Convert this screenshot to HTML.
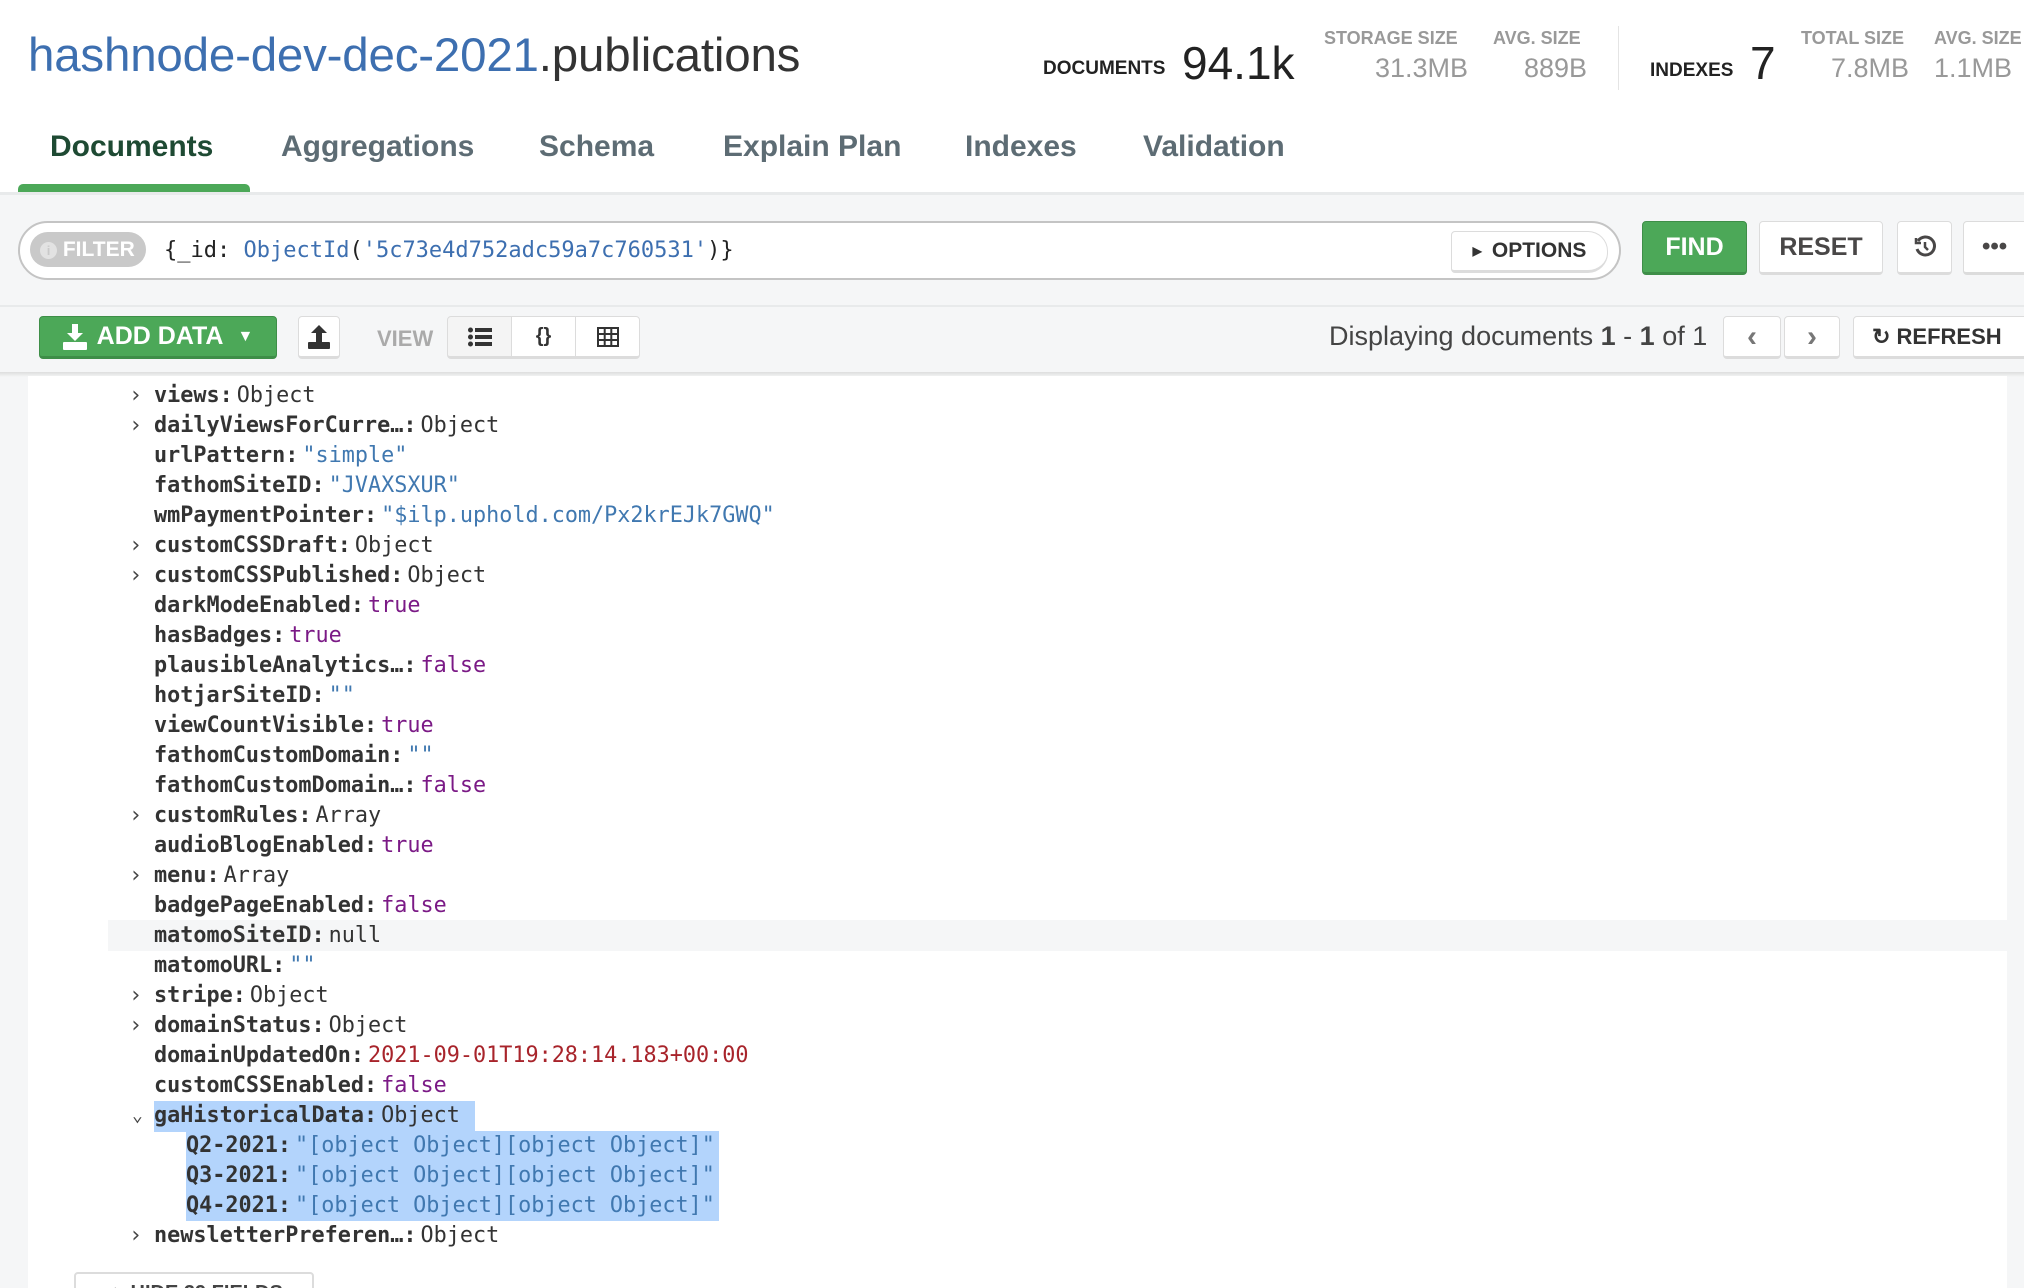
<!DOCTYPE html>
<html style="width:2024px;height:1288px;overflow:hidden"><head><meta charset="utf-8"><style>
*{box-sizing:border-box;margin:0;padding:0}
body{width:2024px;height:1288px;overflow:hidden;background:#fff;font-family:"Liberation Sans",Arial,sans-serif;position:relative;color:#333}
.a{position:absolute;white-space:nowrap}
.btn{position:absolute;background:#fff;border:1px solid #dcdcdc;border-bottom:3px solid #dcdcdc;border-radius:4px;display:flex;align-items:center;justify-content:center;font-weight:bold;color:#494747}
.row{position:absolute;left:108px;right:17px;height:30px;font-family:"DejaVu Sans Mono","Liberation Mono",monospace;font-size:21.8px;line-height:30px;white-space:nowrap}
.row .k{position:absolute;left:46px;font-weight:bold;color:#333}
.row .k span{font-weight:normal;margin-left:4px}
.row .ar{position:absolute;left:21px;top:0;color:#444;font-size:22px}
.s{color:#4078b0}.b{color:#7b1a86}.d{color:#a8242b}.o{color:#333}
.sel{background:#b3d4fc}
</style></head><body>
<div class="a" style="left:28px;top:28px;font-size:47.5px;letter-spacing:-0.2px"><span style="color:#3d6fb0">hashnode-dev-dec-2021</span><span style="color:#333">.publications</span></div>
<div class="a" style="left:1043px;top:58px;font-size:19px;font-weight:bold;color:#222">DOCUMENTS</div>
<div class="a" style="left:1182px;top:36px;font-size:46px;color:#222">94.1k</div>
<div class="a" style="left:1324px;top:28px;font-size:18px;font-weight:bold;color:#999">STORAGE SIZE</div>
<div class="a" style="left:1324px;width:144px;text-align:right;top:53px;font-size:27px;color:#999">31.3MB</div>
<div class="a" style="left:1493px;top:28px;font-size:18px;font-weight:bold;color:#999">AVG. SIZE</div>
<div class="a" style="left:1493px;width:94px;text-align:right;top:53px;font-size:27px;color:#999">889B</div>
<div class="a" style="left:1618px;top:26px;width:1px;height:64px;background:#e4e4e4"></div>
<div class="a" style="left:1650px;top:60px;font-size:19px;font-weight:bold;color:#222">INDEXES</div>
<div class="a" style="left:1750px;top:36px;font-size:46px;color:#222">7</div>
<div class="a" style="left:1801px;top:28px;font-size:18px;font-weight:bold;color:#999">TOTAL SIZE</div>
<div class="a" style="left:1801px;width:108px;text-align:right;top:53px;font-size:27px;color:#999">7.8MB</div>
<div class="a" style="left:1934px;top:28px;font-size:18px;font-weight:bold;color:#999">AVG. SIZE</div>
<div class="a" style="left:1934px;top:53px;font-size:27px;color:#999">1.1MB</div>
<div class="a" style="left:50px;top:130px;font-size:30px;font-weight:bold;color:#1e4a33">Documents</div>
<div class="a" style="left:281px;top:130px;font-size:30px;font-weight:bold;color:#5d6c74">Aggregations</div>
<div class="a" style="left:539px;top:130px;font-size:30px;font-weight:bold;color:#5d6c74">Schema</div>
<div class="a" style="left:723px;top:130px;font-size:30px;font-weight:bold;color:#5d6c74">Explain Plan</div>
<div class="a" style="left:965px;top:130px;font-size:30px;font-weight:bold;color:#5d6c74">Indexes</div>
<div class="a" style="left:1143px;top:130px;font-size:30px;font-weight:bold;color:#5d6c74">Validation</div>
<div class="a" style="left:18px;top:184px;width:232px;height:9px;background:#4ca858;border-radius:5px 5px 0 0"></div>
<div class="a" style="left:0;top:192px;width:2024px;height:180px;background:#f5f6f7;border-top:3px solid #e8eaeb"></div>
<div class="a" style="left:0;top:305px;width:2024px;height:2px;background:#e8eaeb"></div>
<div class="a" style="left:18px;top:221px;width:1603px;height:59px;background:#fff;border:2px solid #c4c4c4;border-radius:30px"></div>
<div class="a" style="left:30px;top:232px;width:116px;height:35px;background:#c9c9c9;border-radius:18px;color:#fff;font-size:21px;font-weight:bold;line-height:35px;padding-left:10px"><span style="display:inline-block;width:17px;height:17px;border-radius:50%;background:#e2e2e2;color:#c9c9c9;font-size:13px;line-height:17px;text-align:center;vertical-align:1px">i</span> FILTER</div>
<div class="a" style="left:164px;top:238px;font-family:'DejaVu Sans Mono',monospace;font-size:22px;color:#222">{_id: <span style="color:#3d6fb0">ObjectId</span>(<span style="color:#3d6fb0">'5c73e4d752adc59a7c760531'</span>)}</div>
<div class="btn" style="left:1451px;top:231px;width:157px;height:42px;border-radius:4px 20px 20px 4px;font-size:21px;color:#333"><span style="font-size:12px;margin-right:10px">▶</span>OPTIONS</div>
<div class="btn" style="left:1642px;top:221px;width:105px;height:54px;background:#4ca858;border-color:#3e8e48;color:#fff;font-size:25px">FIND</div>
<div class="btn" style="left:1759px;top:221px;width:124px;height:54px;font-size:25px;color:#494747">RESET</div>
<div class="btn" style="left:1897px;top:221px;width:55px;height:54px"><svg width="24" height="24" viewBox="0 0 24 24" fill="none" stroke="#494747" stroke-width="3"><path d="M5 6 A9 9 0 1 1 4 14"/><path d="M3 3 v5 h5" stroke-width="2.5"/><path d="M12 7 v5 l3 3" stroke-width="2.5"/></svg></div>
<div class="btn" style="left:1963px;top:221px;width:80px;height:54px;font-size:24px;justify-content:flex-start;padding-left:18px">•••</div>
<div class="btn" style="left:39px;top:316px;width:238px;height:43px;background:#4ca858;border-color:#3e8e48;color:#fff;font-size:25px"><svg width="24" height="26" viewBox="0 0 24 26" style="margin-right:10px"><path d="M9 0h6v9h5l-8 8-8-8h5z" fill="#fff"/><rect x="0" y="18" width="24" height="8" rx="1" fill="#fff"/></svg>ADD DATA<span style="font-size:16px;margin-left:14px">▼</span></div>
<div class="btn" style="left:298px;top:316px;width:42px;height:43px"><svg width="22" height="24" viewBox="0 0 22 24"><path d="M8 17h6V8h5L11 0 3 8h5z" fill="#333"/><rect x="0" y="17" width="22" height="7" rx="1" fill="#333"/></svg></div>
<div class="a" style="left:377px;top:326px;font-size:22px;font-weight:bold;color:#aaa">VIEW</div>
<div class="btn" style="left:447px;top:316px;width:65px;height:43px;background:#f4f4f4;border-radius:4px 0 0 4px"><svg width="24" height="20" viewBox="0 0 24 20" fill="#333"><circle cx="2.5" cy="3" r="2.5"/><circle cx="2.5" cy="10" r="2.5"/><circle cx="2.5" cy="17" r="2.5"/><rect x="7" y="1" width="17" height="4"/><rect x="7" y="8" width="17" height="4"/><rect x="7" y="15" width="17" height="4"/></svg></div>
<div class="btn" style="left:511px;top:316px;width:65px;height:43px;border-radius:0;font-size:20px;color:#333">{}</div>
<div class="btn" style="left:575px;top:316px;width:65px;height:43px;border-radius:0 4px 4px 0"><svg width="22" height="20" viewBox="0 0 22 20" fill="none" stroke="#333" stroke-width="2"><rect x="1" y="1" width="20" height="18"/><path d="M1 7h20M1 13h20M7.7 1v18M14.3 1v18"/></svg></div>
<div class="a" style="left:1329px;top:321px;font-size:27px;color:#444">Displaying documents <b>1</b> - <b>1</b> of 1</div>
<div class="btn" style="left:1723px;top:316px;width:58px;height:43px;color:#777;font-size:30px">‹</div>
<div class="btn" style="left:1784px;top:316px;width:56px;height:43px;color:#777;font-size:30px">›</div>
<div class="btn" style="left:1853px;top:316px;width:190px;height:43px;font-size:22px;color:#333;justify-content:flex-start;padding-left:18px">&#x21BB;&nbsp;REFRESH</div>
<div class="a" style="left:0;top:372px;width:2024px;height:916px;background:#f5f6f7"></div>
<div class="a" style="left:0;top:372px;width:2024px;height:5px;background:linear-gradient(#ddd,#f5f6f7)"></div>
<div class="a" style="left:28px;top:376px;width:1979px;height:912px;background:#fff"></div>
<div class="a" style="left:108px;top:920px;width:1899px;height:31px;background:#f5f6f7"></div>

<div class="row" style="top:381px"><span class="ar">›</span><span class="k">views:<span class="o">Object</span></span></div>
<div class="row" style="top:411px"><span class="ar">›</span><span class="k">dailyViewsForCurre…:<span class="o">Object</span></span></div>
<div class="row" style="top:441px"><span class="k">urlPattern:<span class="s">"simple"</span></span></div>
<div class="row" style="top:471px"><span class="k">fathomSiteID:<span class="s">"JVAXSXUR"</span></span></div>
<div class="row" style="top:501px"><span class="k">wmPaymentPointer:<span class="s">"$ilp.uphold.com/Px2krEJk7GWQ"</span></span></div>
<div class="row" style="top:531px"><span class="ar">›</span><span class="k">customCSSDraft:<span class="o">Object</span></span></div>
<div class="row" style="top:561px"><span class="ar">›</span><span class="k">customCSSPublished:<span class="o">Object</span></span></div>
<div class="row" style="top:591px"><span class="k">darkModeEnabled:<span class="b">true</span></span></div>
<div class="row" style="top:621px"><span class="k">hasBadges:<span class="b">true</span></span></div>
<div class="row" style="top:651px"><span class="k">plausibleAnalytics…:<span class="b">false</span></span></div>
<div class="row" style="top:681px"><span class="k">hotjarSiteID:<span class="s">""</span></span></div>
<div class="row" style="top:711px"><span class="k">viewCountVisible:<span class="b">true</span></span></div>
<div class="row" style="top:741px"><span class="k">fathomCustomDomain:<span class="s">""</span></span></div>
<div class="row" style="top:771px"><span class="k">fathomCustomDomain…:<span class="b">false</span></span></div>
<div class="row" style="top:801px"><span class="ar">›</span><span class="k">customRules:<span class="o">Array</span></span></div>
<div class="row" style="top:831px"><span class="k">audioBlogEnabled:<span class="b">true</span></span></div>
<div class="row" style="top:861px"><span class="ar">›</span><span class="k">menu:<span class="o">Array</span></span></div>
<div class="row" style="top:891px"><span class="k">badgePageEnabled:<span class="b">false</span></span></div>
<div class="row" style="top:921px"><span class="k">matomoSiteID:<span class="o">null</span></span></div>
<div class="row" style="top:951px"><span class="k">matomoURL:<span class="s">""</span></span></div>
<div class="row" style="top:981px"><span class="ar">›</span><span class="k">stripe:<span class="o">Object</span></span></div>
<div class="row" style="top:1011px"><span class="ar">›</span><span class="k">domainStatus:<span class="o">Object</span></span></div>
<div class="row" style="top:1041px"><span class="k">domainUpdatedOn:<span class="d">2021-09-01T19:28:14.183+00:00</span></span></div>
<div class="row" style="top:1071px"><span class="k">customCSSEnabled:<span class="b">false</span></span></div>
<div class="a sel" style="left:154px;top:1101px;width:321px;height:31px"></div>
<div class="a sel" style="left:186px;top:1131px;width:533px;height:90px"></div>
<div class="row" style="top:1101px"><span class="ar" style="left:24px;font-size:18px">⌄</span><span class="k">gaHistoricalData:<span class="o">Object</span></span></div>
<div class="row" style="top:1131px"><span class="k" style="left:78px">Q2-2021:<span class="s">"[object Object][object Object]"</span></span></div>
<div class="row" style="top:1161px"><span class="k" style="left:78px">Q3-2021:<span class="s">"[object Object][object Object]"</span></span></div>
<div class="row" style="top:1191px"><span class="k" style="left:78px">Q4-2021:<span class="s">"[object Object][object Object]"</span></span></div>
<div class="row" style="top:1221px"><span class="ar">›</span><span class="k">newsletterPreferen…:<span class="o">Object</span></span></div>
<div class="a" style="left:74px;top:1272px;width:240px;height:16px;overflow:hidden"><div style="width:240px;height:40px;border:2px solid #dcdcdc;border-radius:4px;background:#fff;font-weight:bold;font-size:20px;color:#444;text-align:center;padding-top:8px">▲ HIDE 29 FIELDS</div></div>
</body></html>
